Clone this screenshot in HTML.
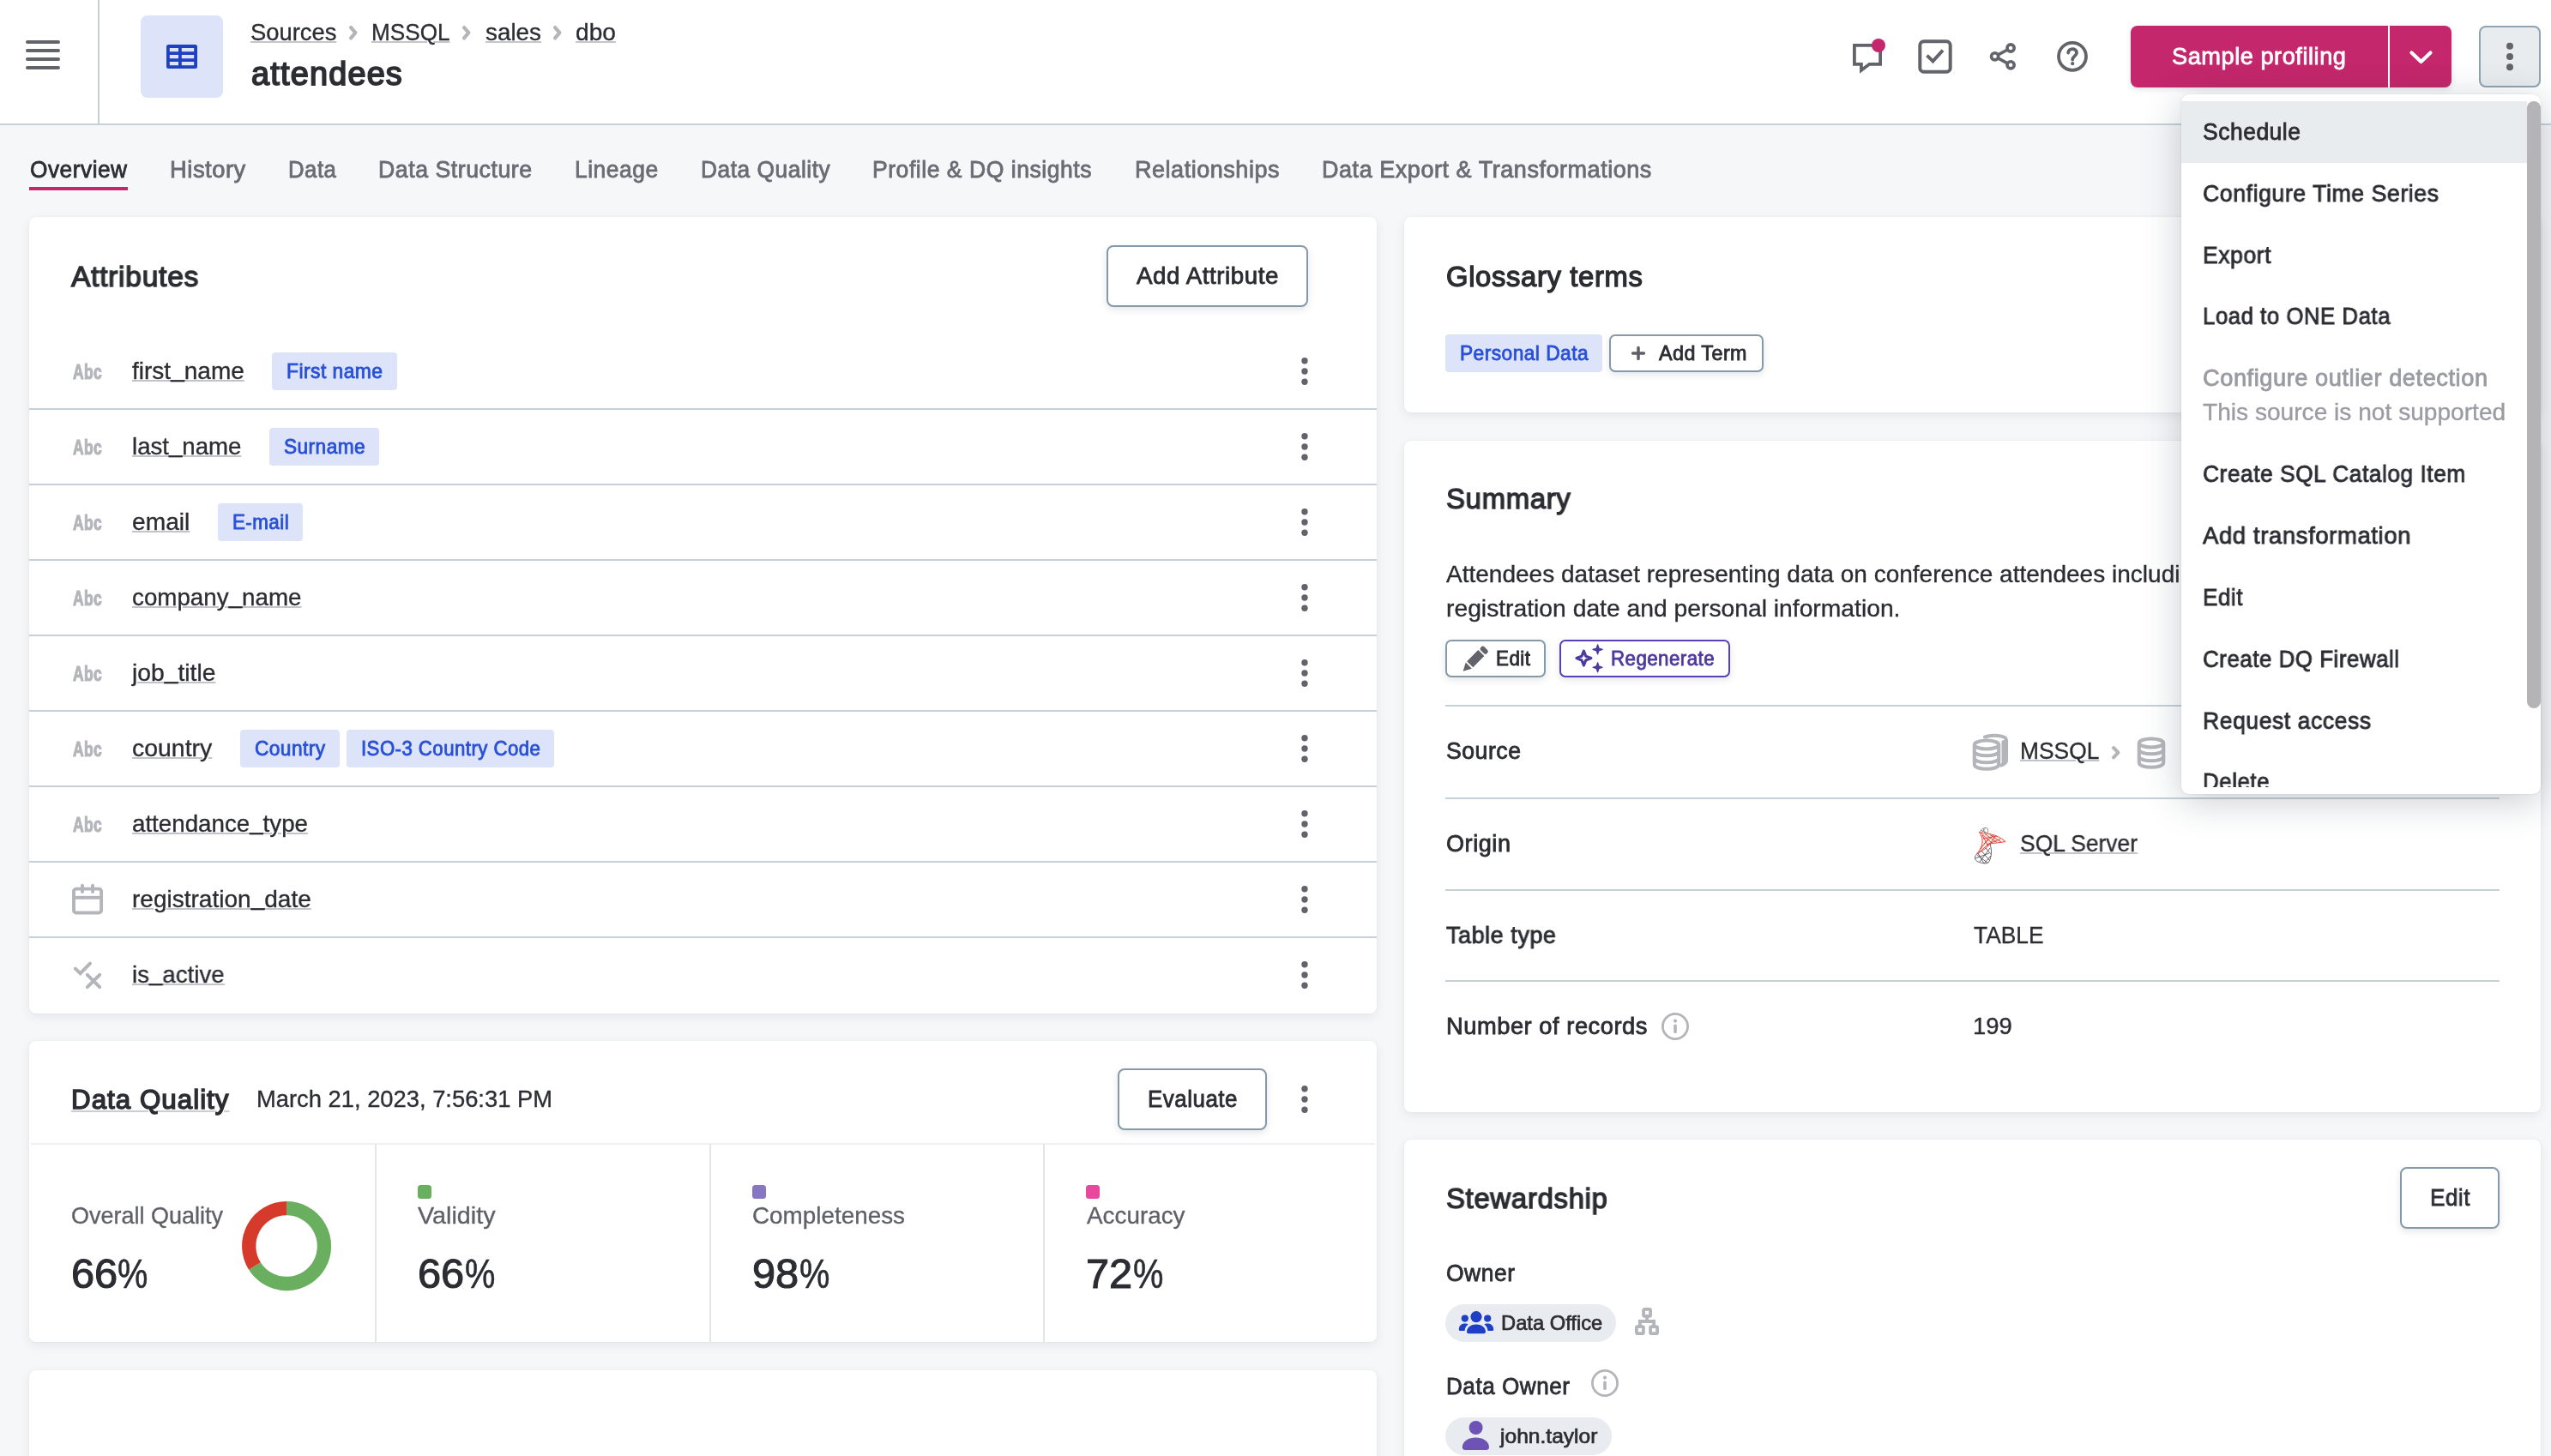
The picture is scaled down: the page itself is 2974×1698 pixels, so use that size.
<!DOCTYPE html>
<html><head><meta charset="utf-8"><title>attendees</title>
<style>html,body{margin:0;padding:0;width:2974px;height:1698px;overflow:hidden;}body{position:relative;background:#f6f7f9;font-family:"Liberation Sans",sans-serif;}#r{position:absolute;left:0;top:0;width:100%;height:100%;overflow:hidden;will-change:transform;}#r>div,#r>svg,#r>span,#menuclip>span{position:absolute;}svg{overflow:visible;display:block;}.t{white-space:pre;line-height:1;display:block;text-decoration-skip-ink:auto;}</style></head>
<body>
<div id="r">
<div style="left:0px;top:0px;width:2974px;height:144px;background:#fff;"></div>
<div style="left:0px;top:144px;width:2974px;height:2px;background:#c6d1d7;"></div>
<div style="left:114px;top:0px;width:2px;height:144px;background:#c6d1d7;"></div>
<div style="left:30px;top:47px;width:40px;height:4px;background:#62636b;border-radius:2px;"></div>
<div style="left:30px;top:57px;width:40px;height:4px;background:#62636b;border-radius:2px;"></div>
<div style="left:30px;top:67px;width:40px;height:4px;background:#62636b;border-radius:2px;"></div>
<div style="left:30px;top:77px;width:40px;height:4px;background:#62636b;border-radius:2px;"></div>
<div style="left:164px;top:18px;width:96px;height:96px;background:#dde3f8;border-radius:8px;"></div>
<svg style="left:194px;top:52px;" width="36" height="28" viewBox="0 0 36 28"><rect width="36" height="28" rx="2.5" fill="#2140c0"/><rect x="3.8" y="4" width="10.2" height="4.2" fill="#dde3f8"/><rect x="17.8" y="4" width="14.4" height="4.2" fill="#dde3f8"/><rect x="3.8" y="12" width="10.2" height="4.2" fill="#dde3f8"/><rect x="17.8" y="12" width="14.4" height="4.2" fill="#dde3f8"/><rect x="3.8" y="20" width="10.2" height="4.2" fill="#dde3f8"/><rect x="17.8" y="20" width="14.4" height="4.2" fill="#dde3f8"/></svg>
<span class="t" style="left:292.00px;top:24.00px;font-size:28px;color:#2c2d33;-webkit-text-stroke:0.34px #2c2d33;transform:scaleX(0.9774);transform-origin:0 0;text-decoration:underline;text-decoration-color:#c4c5ca;text-decoration-thickness:2px;text-underline-offset:1.0px;">Sources</span>
<svg style="left:404px;top:27px;" width="16" height="22.4" viewBox="-3 -3 16 22.4"><path d="M2.1 2.1 L7.38 8.2 L2.1 14.299999999999999" fill="none" stroke="#b4b5bb" stroke-width="4.2" stroke-linecap="round" stroke-linejoin="round"/></svg>
<span class="t" style="left:433.00px;top:24.00px;font-size:28px;color:#2c2d33;-webkit-text-stroke:0.34px #2c2d33;transform:scaleX(0.9334);transform-origin:0 0;text-decoration:underline;text-decoration-color:#c4c5ca;text-decoration-thickness:2px;text-underline-offset:1.0px;">MSSQL</span>
<svg style="left:536px;top:27px;" width="16" height="22.4" viewBox="-3 -3 16 22.4"><path d="M2.1 2.1 L7.38 8.2 L2.1 14.299999999999999" fill="none" stroke="#b4b5bb" stroke-width="4.2" stroke-linecap="round" stroke-linejoin="round"/></svg>
<span class="t" style="left:565.50px;top:24.00px;font-size:28px;color:#2c2d33;-webkit-text-stroke:0.34px #2c2d33;transform:scaleX(0.9943);transform-origin:0 0;text-decoration:underline;text-decoration-color:#c4c5ca;text-decoration-thickness:2px;text-underline-offset:1.0px;">sales</span>
<svg style="left:642px;top:27px;" width="16" height="22.4" viewBox="-3 -3 16 22.4"><path d="M2.1 2.1 L7.38 8.2 L2.1 14.299999999999999" fill="none" stroke="#b4b5bb" stroke-width="4.2" stroke-linecap="round" stroke-linejoin="round"/></svg>
<span class="t" style="left:671.00px;top:24.00px;font-size:28px;color:#2c2d33;-webkit-text-stroke:0.34px #2c2d33;transform:scaleX(1.0060);transform-origin:0 0;text-decoration:underline;text-decoration-color:#c4c5ca;text-decoration-thickness:2px;text-underline-offset:1.0px;">dbo</span>
<span class="t" style="left:292.80px;top:67.00px;font-size:38px;color:#2c2d33;-webkit-text-stroke:1.75px #2c2d33;letter-spacing:1.22px;transform:scaleX(0.9949);transform-origin:0 0;">attendees</span>
<svg style="left:2150px;top:40px;" width="60" height="60" viewBox="0 0 60 60"><path d="M11.9 12.9 H42.1 V34.8 H29.4 L19.9 42 V34.8 H11.9 Z" fill="none" stroke="#62636b" stroke-width="3.8" stroke-linejoin="miter"/><circle cx="40" cy="13" r="8" fill="#c4276b"/></svg>
<svg style="left:2230px;top:40px;" width="52" height="52" viewBox="0 0 52 52"><rect x="8.3" y="8.3" width="35.4" height="35.4" rx="4.5" fill="none" stroke="#62636b" stroke-width="4"/><path d="M16.5 24.6 L23.4 31.4 L35 18.6" fill="none" stroke="#62636b" stroke-width="3.8"/></svg>
<svg style="left:2314px;top:44px;" width="44" height="44" viewBox="0 0 44 44"><g fill="none" stroke="#62636b" stroke-width="3.6"><circle cx="11.6" cy="21.8" r="4.1"/><circle cx="30.1" cy="12" r="4.1"/><circle cx="30.1" cy="31.8" r="4.1"/><path d="M15.4 19.8 L26.4 14 M15.4 23.8 L26.4 29.8"/></g></svg>
<svg style="left:2394px;top:44px;" width="44" height="44" viewBox="0 0 44 44"><circle cx="22" cy="21.8" r="16" fill="none" stroke="#62636b" stroke-width="3.8"/><path d="M17.2 17.6 C17.2 11.6 27 11.6 27 17.4 C27 21.4 22.2 21.4 22.2 25.6" fill="none" stroke="#62636b" stroke-width="3.8" stroke-linecap="round"/><circle cx="22.2" cy="30.2" r="2.1" fill="#62636b"/></svg>
<div style="left:2484px;top:30px;width:374px;height:72px;background:#c4276b;border-radius:8px;box-shadow:0 2px 6px rgba(40,50,70,.14);"></div>
<div style="left:2784px;top:30px;width:2px;height:72px;background:#fff;"></div>
<span class="t" style="left:2532.00px;top:52.00px;font-size:28px;color:#ffffff;-webkit-text-stroke:0.84px #ffffff;letter-spacing:0.56px;transform:scaleX(0.9703);transform-origin:0 0;">Sample profiling</span>
<svg style="left:2805px;top:54px;" width="36" height="26" viewBox="0 0 36 26"><path d="M6.5 7.5 L17.5 18 L28.5 7.5" fill="none" stroke="#fff" stroke-width="4.2" stroke-linecap="round" stroke-linejoin="round"/></svg>
<div style="left:2890px;top:30px;width:72px;height:72px;background:#e8ecef;border:2px solid #8fa3b3;border-radius:8px;box-sizing:border-box;"></div>
<svg style="left:2916px;top:46.400000000000006px;" width="20" height="40" viewBox="0 0 20 40"><circle cx="10" cy="7.800000000000001" r="4.0" fill="#62636b"/><circle cx="10" cy="20" r="4.0" fill="#62636b"/><circle cx="10" cy="32.2" r="4.0" fill="#62636b"/></svg>
<span class="t" style="left:34.60px;top:184.00px;font-size:28px;color:#2c2d33;-webkit-text-stroke:0.84px #2c2d33;letter-spacing:0.56px;transform:scaleX(0.9375);transform-origin:0 0;">Overview</span>
<span class="t" style="left:197.80px;top:184.00px;font-size:28px;color:#6a6b74;-webkit-text-stroke:0.84px #6a6b74;letter-spacing:0.56px;transform:scaleX(0.9753);transform-origin:0 0;">History</span>
<span class="t" style="left:335.60px;top:184.00px;font-size:28px;color:#6a6b74;-webkit-text-stroke:0.84px #6a6b74;letter-spacing:0.56px;transform:scaleX(0.9187);transform-origin:0 0;">Data</span>
<span class="t" style="left:441.40px;top:184.00px;font-size:28px;color:#6a6b74;-webkit-text-stroke:0.84px #6a6b74;letter-spacing:0.56px;transform:scaleX(0.9534);transform-origin:0 0;">Data Structure</span>
<span class="t" style="left:670.30px;top:184.00px;font-size:28px;color:#6a6b74;-webkit-text-stroke:0.84px #6a6b74;letter-spacing:0.56px;transform:scaleX(0.9432);transform-origin:0 0;">Lineage</span>
<span class="t" style="left:817.00px;top:184.00px;font-size:28px;color:#6a6b74;-webkit-text-stroke:0.84px #6a6b74;letter-spacing:0.56px;transform:scaleX(0.9403);transform-origin:0 0;">Data Quality</span>
<span class="t" style="left:1017.20px;top:184.00px;font-size:28px;color:#6a6b74;-webkit-text-stroke:0.84px #6a6b74;letter-spacing:0.56px;transform:scaleX(0.9479);transform-origin:0 0;">Profile &amp; DQ insights</span>
<span class="t" style="left:1322.60px;top:184.00px;font-size:28px;color:#6a6b74;-webkit-text-stroke:0.84px #6a6b74;letter-spacing:0.56px;transform:scaleX(0.9636);transform-origin:0 0;">Relationships</span>
<span class="t" style="left:1540.60px;top:184.00px;font-size:28px;color:#6a6b74;-webkit-text-stroke:0.84px #6a6b74;letter-spacing:0.56px;transform:scaleX(0.9645);transform-origin:0 0;">Data Export &amp; Transformations</span>
<div style="left:34px;top:218px;width:115px;height:4px;background:#c4276b;"></div>
<div style="left:34px;top:253px;width:1571px;height:929px;background:#fff;border-radius:8px;box-shadow:0 0 2px rgba(50,70,80,.08),0 4px 12px rgba(50,70,80,.09);"></div>
<span class="t" style="left:83.30px;top:305.00px;font-size:34px;color:#2c2d33;-webkit-text-stroke:1.36px #2c2d33;letter-spacing:0.68px;transform:scaleX(0.9905);transform-origin:0 0;">Attributes</span>
<div style="left:1290px;top:286px;width:235px;height:72px;background:#fff;border:2px solid #8499a9;border-radius:8px;box-sizing:border-box;box-shadow:0 3px 9px rgba(40,50,70,.12);"></div>
<span class="t" style="left:1325.00px;top:308.00px;font-size:28px;color:#2c2d33;-webkit-text-stroke:0.84px #2c2d33;letter-spacing:0.56px;transform:scaleX(0.9903);transform-origin:0 0;">Add Attribute</span>
<span class="t" style="left:85px;top:423px;font-size:23.4px;font-weight:700;color:#b4b5bb;transform:scaleX(0.745);transform-origin:0 0;letter-spacing:0.6px;-webkit-text-stroke:1.1px #b4b5bb;">Abc</span>
<span class="t" style="left:154.20px;top:419.00px;font-size:28px;color:#2c2d33;-webkit-text-stroke:0.34px #2c2d33;transform:scaleX(1.0005);transform-origin:0 0;text-decoration:underline;text-decoration-color:#c3c4c9;text-decoration-thickness:2px;text-underline-offset:1.0px;">first<i style="display:inline-block;font-style:normal;transform:translateY(-3.5px);text-decoration:underline;text-decoration-color:#c3c4c9;text-decoration-thickness:2px;text-underline-offset:4.5px;text-decoration-skip-ink:none;">_</i>name</span>
<div style="left:317.0px;top:411px;width:146px;height:44px;background:#dde3f8;border-radius:4px;"></div>
<span class="t" style="left:334.00px;top:421.00px;font-size:24px;color:#2850d8;-webkit-text-stroke:0.86px #2850d8;letter-spacing:0.48px;transform:scaleX(0.9521);transform-origin:0 0;">First name</span>
<svg style="left:1511px;top:413.2px;" width="20" height="40" viewBox="0 0 20 40"><circle cx="10" cy="7.800000000000001" r="3.7" fill="#62636b"/><circle cx="10" cy="20" r="3.7" fill="#62636b"/><circle cx="10" cy="32.2" r="3.7" fill="#62636b"/></svg>
<div style="left:34px;top:476px;width:1571px;height:2px;background:#c6d1d7;"></div>
<span class="t" style="left:85px;top:511px;font-size:23.4px;font-weight:700;color:#b4b5bb;transform:scaleX(0.745);transform-origin:0 0;letter-spacing:0.6px;-webkit-text-stroke:1.1px #b4b5bb;">Abc</span>
<span class="t" style="left:154.20px;top:507.00px;font-size:28px;color:#2c2d33;-webkit-text-stroke:0.34px #2c2d33;transform:scaleX(0.9860);transform-origin:0 0;text-decoration:underline;text-decoration-color:#c3c4c9;text-decoration-thickness:2px;text-underline-offset:1.0px;">last<i style="display:inline-block;font-style:normal;transform:translateY(-3.5px);text-decoration:underline;text-decoration-color:#c3c4c9;text-decoration-thickness:2px;text-underline-offset:4.5px;text-decoration-skip-ink:none;">_</i>name</span>
<div style="left:313.6px;top:499px;width:128.6px;height:44px;background:#dde3f8;border-radius:4px;"></div>
<span class="t" style="left:330.60px;top:509.00px;font-size:24px;color:#2850d8;-webkit-text-stroke:0.86px #2850d8;letter-spacing:0.48px;transform:scaleX(0.9439);transform-origin:0 0;">Surname</span>
<svg style="left:1511px;top:501.19999999999993px;" width="20" height="40" viewBox="0 0 20 40"><circle cx="10" cy="7.800000000000001" r="3.7" fill="#62636b"/><circle cx="10" cy="20" r="3.7" fill="#62636b"/><circle cx="10" cy="32.2" r="3.7" fill="#62636b"/></svg>
<div style="left:34px;top:564px;width:1571px;height:2px;background:#c6d1d7;"></div>
<span class="t" style="left:85px;top:599px;font-size:23.4px;font-weight:700;color:#b4b5bb;transform:scaleX(0.745);transform-origin:0 0;letter-spacing:0.6px;-webkit-text-stroke:1.1px #b4b5bb;">Abc</span>
<span class="t" style="left:154.20px;top:595.00px;font-size:28px;color:#2c2d33;-webkit-text-stroke:0.34px #2c2d33;transform:scaleX(1.0071);transform-origin:0 0;text-decoration:underline;text-decoration-color:#c3c4c9;text-decoration-thickness:2px;text-underline-offset:1.0px;">email</span>
<div style="left:253.6px;top:587px;width:99.6px;height:44px;background:#dde3f8;border-radius:4px;"></div>
<span class="t" style="left:270.60px;top:597.00px;font-size:24px;color:#2850d8;-webkit-text-stroke:0.86px #2850d8;letter-spacing:0.48px;transform:scaleX(0.9324);transform-origin:0 0;">E-mail</span>
<svg style="left:1511px;top:589.1999999999999px;" width="20" height="40" viewBox="0 0 20 40"><circle cx="10" cy="7.800000000000001" r="3.7" fill="#62636b"/><circle cx="10" cy="20" r="3.7" fill="#62636b"/><circle cx="10" cy="32.2" r="3.7" fill="#62636b"/></svg>
<div style="left:34px;top:652px;width:1571px;height:2px;background:#c6d1d7;"></div>
<span class="t" style="left:85px;top:687px;font-size:23.4px;font-weight:700;color:#b4b5bb;transform:scaleX(0.745);transform-origin:0 0;letter-spacing:0.6px;-webkit-text-stroke:1.1px #b4b5bb;">Abc</span>
<span class="t" style="left:154.20px;top:683.00px;font-size:28px;color:#2c2d33;-webkit-text-stroke:0.34px #2c2d33;transform:scaleX(0.9912);transform-origin:0 0;text-decoration:underline;text-decoration-color:#c3c4c9;text-decoration-thickness:2px;text-underline-offset:1.0px;">company<i style="display:inline-block;font-style:normal;transform:translateY(-3.5px);text-decoration:underline;text-decoration-color:#c3c4c9;text-decoration-thickness:2px;text-underline-offset:4.5px;text-decoration-skip-ink:none;">_</i>name</span>
<svg style="left:1511px;top:677.1999999999999px;" width="20" height="40" viewBox="0 0 20 40"><circle cx="10" cy="7.800000000000001" r="3.7" fill="#62636b"/><circle cx="10" cy="20" r="3.7" fill="#62636b"/><circle cx="10" cy="32.2" r="3.7" fill="#62636b"/></svg>
<div style="left:34px;top:740px;width:1571px;height:2px;background:#c6d1d7;"></div>
<span class="t" style="left:85px;top:775px;font-size:23.4px;font-weight:700;color:#b4b5bb;transform:scaleX(0.745);transform-origin:0 0;letter-spacing:0.6px;-webkit-text-stroke:1.1px #b4b5bb;">Abc</span>
<span class="t" style="left:154.20px;top:771.00px;font-size:28px;color:#2c2d33;-webkit-text-stroke:0.34px #2c2d33;transform:scaleX(1.0100);transform-origin:0 0;text-decoration:underline;text-decoration-color:#c3c4c9;text-decoration-thickness:2px;text-underline-offset:1.0px;">job<i style="display:inline-block;font-style:normal;transform:translateY(-3.5px);text-decoration:underline;text-decoration-color:#c3c4c9;text-decoration-thickness:2px;text-underline-offset:4.5px;text-decoration-skip-ink:none;">_</i>title</span>
<svg style="left:1511px;top:765.1999999999999px;" width="20" height="40" viewBox="0 0 20 40"><circle cx="10" cy="7.800000000000001" r="3.7" fill="#62636b"/><circle cx="10" cy="20" r="3.7" fill="#62636b"/><circle cx="10" cy="32.2" r="3.7" fill="#62636b"/></svg>
<div style="left:34px;top:828px;width:1571px;height:2px;background:#c6d1d7;"></div>
<span class="t" style="left:85px;top:863px;font-size:23.4px;font-weight:700;color:#b4b5bb;transform:scaleX(0.745);transform-origin:0 0;letter-spacing:0.6px;-webkit-text-stroke:1.1px #b4b5bb;">Abc</span>
<span class="t" style="left:154.20px;top:859.00px;font-size:28px;color:#2c2d33;-webkit-text-stroke:0.34px #2c2d33;transform:scaleX(1.0160);transform-origin:0 0;text-decoration:underline;text-decoration-color:#c3c4c9;text-decoration-thickness:2px;text-underline-offset:1.0px;">country</span>
<div style="left:279.5px;top:851px;width:116px;height:44px;background:#dde3f8;border-radius:4px;"></div>
<span class="t" style="left:296.50px;top:861.00px;font-size:24px;color:#2850d8;-webkit-text-stroke:0.86px #2850d8;letter-spacing:0.48px;transform:scaleX(0.9439);transform-origin:0 0;">Country</span>
<div style="left:403.5px;top:851px;width:242.8px;height:44px;background:#dde3f8;border-radius:4px;"></div>
<span class="t" style="left:420.50px;top:861.00px;font-size:24px;color:#2850d8;-webkit-text-stroke:0.86px #2850d8;letter-spacing:0.48px;transform:scaleX(0.9258);transform-origin:0 0;">ISO-3 Country Code</span>
<svg style="left:1511px;top:853.1999999999999px;" width="20" height="40" viewBox="0 0 20 40"><circle cx="10" cy="7.800000000000001" r="3.7" fill="#62636b"/><circle cx="10" cy="20" r="3.7" fill="#62636b"/><circle cx="10" cy="32.2" r="3.7" fill="#62636b"/></svg>
<div style="left:34px;top:916px;width:1571px;height:2px;background:#c6d1d7;"></div>
<span class="t" style="left:85px;top:951px;font-size:23.4px;font-weight:700;color:#b4b5bb;transform:scaleX(0.745);transform-origin:0 0;letter-spacing:0.6px;-webkit-text-stroke:1.1px #b4b5bb;">Abc</span>
<span class="t" style="left:154.20px;top:947.00px;font-size:28px;color:#2c2d33;-webkit-text-stroke:0.34px #2c2d33;transform:scaleX(0.9899);transform-origin:0 0;text-decoration:underline;text-decoration-color:#c3c4c9;text-decoration-thickness:2px;text-underline-offset:1.0px;">attendance<i style="display:inline-block;font-style:normal;transform:translateY(-3.5px);text-decoration:underline;text-decoration-color:#c3c4c9;text-decoration-thickness:2px;text-underline-offset:4.5px;text-decoration-skip-ink:none;">_</i>type</span>
<svg style="left:1511px;top:941.1999999999999px;" width="20" height="40" viewBox="0 0 20 40"><circle cx="10" cy="7.800000000000001" r="3.7" fill="#62636b"/><circle cx="10" cy="20" r="3.7" fill="#62636b"/><circle cx="10" cy="32.2" r="3.7" fill="#62636b"/></svg>
<div style="left:34px;top:1004px;width:1571px;height:2px;background:#c6d1d7;"></div>
<svg style="left:78px;top:1026.3px;" width="48" height="48" viewBox="0 0 48 48"><g fill="none" stroke="#b4b5bb" stroke-width="3.9"><rect x="8" y="10.6" width="32.1" height="27.9" rx="3"/><path d="M8 20.8 H40"/><path d="M18 6.8 V14 M30 6.8 V14" stroke-linecap="round"/></g></svg>
<span class="t" style="left:154.20px;top:1035.00px;font-size:28px;color:#2c2d33;-webkit-text-stroke:0.34px #2c2d33;transform:scaleX(1.0010);transform-origin:0 0;text-decoration:underline;text-decoration-color:#c3c4c9;text-decoration-thickness:2px;text-underline-offset:1.0px;">registration<i style="display:inline-block;font-style:normal;transform:translateY(-3.5px);text-decoration:underline;text-decoration-color:#c3c4c9;text-decoration-thickness:2px;text-underline-offset:4.5px;text-decoration-skip-ink:none;">_</i>date</span>
<svg style="left:1511px;top:1029.2px;" width="20" height="40" viewBox="0 0 20 40"><circle cx="10" cy="7.800000000000001" r="3.7" fill="#62636b"/><circle cx="10" cy="20" r="3.7" fill="#62636b"/><circle cx="10" cy="32.2" r="3.7" fill="#62636b"/></svg>
<div style="left:34px;top:1092px;width:1571px;height:2px;background:#c6d1d7;"></div>
<svg style="left:78px;top:1112.8px;" width="48" height="48" viewBox="0 0 48 48"><g fill="none" stroke="#b4b5bb" stroke-width="4" stroke-linecap="round"><path d="M9.8 16.6 L15.6 22.2 L27 10.6"/><path d="M23.8 23.8 L38.2 38.2 M38.2 23.8 L23.8 38.2"/></g></svg>
<span class="t" style="left:154.20px;top:1123.00px;font-size:28px;color:#2c2d33;-webkit-text-stroke:0.34px #2c2d33;transform:scaleX(0.9865);transform-origin:0 0;text-decoration:underline;text-decoration-color:#c3c4c9;text-decoration-thickness:2px;text-underline-offset:1.0px;">is<i style="display:inline-block;font-style:normal;transform:translateY(-3.5px);text-decoration:underline;text-decoration-color:#c3c4c9;text-decoration-thickness:2px;text-underline-offset:4.5px;text-decoration-skip-ink:none;">_</i>active</span>
<svg style="left:1511px;top:1117.2px;" width="20" height="40" viewBox="0 0 20 40"><circle cx="10" cy="7.800000000000001" r="3.7" fill="#62636b"/><circle cx="10" cy="20" r="3.7" fill="#62636b"/><circle cx="10" cy="32.2" r="3.7" fill="#62636b"/></svg>
<div style="left:34px;top:1214px;width:1571px;height:351px;background:#fff;border-radius:8px;box-shadow:0 0 2px rgba(50,70,80,.08),0 4px 12px rgba(50,70,80,.09);"></div>
<span class="t" style="left:82.50px;top:1266.00px;font-size:32px;color:#2c2d33;-webkit-text-stroke:1.47px #2c2d33;letter-spacing:1.02px;transform:scaleX(0.9797);transform-origin:0 0;text-decoration:underline;text-decoration-color:#cdced3;text-decoration-thickness:2px;text-underline-offset:2.2px;">Data Quality</span>
<span class="t" style="left:299.00px;top:1268.00px;font-size:28px;color:#2c2d33;-webkit-text-stroke:0.34px #2c2d33;transform:scaleX(0.9764);transform-origin:0 0;">March 21, 2023, 7:56:31 PM</span>
<div style="left:1303px;top:1246px;width:174px;height:72px;background:#fff;border:2px solid #8499a9;border-radius:8px;box-sizing:border-box;box-shadow:0 3px 9px rgba(40,50,70,.12);"></div>
<span class="t" style="left:1338.00px;top:1268.00px;font-size:28px;color:#2c2d33;-webkit-text-stroke:0.84px #2c2d33;letter-spacing:0.56px;transform:scaleX(0.9255);transform-origin:0 0;">Evaluate</span>
<svg style="left:1511px;top:1262px;" width="20" height="40" viewBox="0 0 20 40"><circle cx="10" cy="7.800000000000001" r="3.7" fill="#62636b"/><circle cx="10" cy="20" r="3.7" fill="#62636b"/><circle cx="10" cy="32.2" r="3.7" fill="#62636b"/></svg>
<div style="left:36px;top:1333px;width:1567px;height:1.5px;background:#eff0f3;"></div>
<div style="left:437px;top:1334px;width:2px;height:231px;background:#e4e5e8;"></div>
<div style="left:827px;top:1334px;width:2px;height:231px;background:#e4e5e8;"></div>
<div style="left:1216px;top:1334px;width:2px;height:231px;background:#e4e5e8;"></div>
<span class="t" style="left:82.50px;top:1404.00px;font-size:28px;color:#5f6068;-webkit-text-stroke:0.34px #5f6068;transform:scaleX(0.9639);transform-origin:0 0;">Overall Quality</span>
<span class="t" style="left:82.50px;top:1462.00px;font-size:48px;color:#2c2d33;-webkit-text-stroke:1.06px #2c2d33;transform:scaleX(1.0152);transform-origin:0 0;">66</span>
<span class="t" style="left:137.10px;top:1462.00px;font-size:48px;color:#2c2d33;-webkit-text-stroke:0.58px #2c2d33;transform:scaleX(0.8293);transform-origin:0 0;">%</span>
<svg style="left:274px;top:1393px;" width="120" height="120" viewBox="0 0 120 120"><path d="M60.10 16.20 A43.9 43.9 0 1 1 22.95 83.49" fill="none" stroke="#6aae5f" stroke-width="16.3"/><path d="M22.95 83.49 A43.9 43.9 0 0 1 60.10 16.20" fill="none" stroke="#d63a2a" stroke-width="16.3"/></svg>
<div style="left:487px;top:1382px;width:16px;height:16px;background:#6aae5f;border-radius:3.5px;"></div>
<span class="t" style="left:487.30px;top:1404.00px;font-size:28px;color:#5f6068;-webkit-text-stroke:0.34px #5f6068;transform:scaleX(1.0262);transform-origin:0 0;">Validity</span>
<span class="t" style="left:487.00px;top:1462.00px;font-size:48px;color:#2c2d33;-webkit-text-stroke:1.06px #2c2d33;transform:scaleX(1.0152);transform-origin:0 0;">66</span>
<span class="t" style="left:541.60px;top:1462.00px;font-size:48px;color:#2c2d33;-webkit-text-stroke:0.58px #2c2d33;transform:scaleX(0.8293);transform-origin:0 0;">%</span>
<div style="left:877px;top:1382px;width:16px;height:16px;background:#8776c3;border-radius:3.5px;"></div>
<span class="t" style="left:877.30px;top:1404.00px;font-size:28px;color:#5f6068;-webkit-text-stroke:0.34px #5f6068;transform:scaleX(0.9945);transform-origin:0 0;">Completeness</span>
<span class="t" style="left:877.00px;top:1462.00px;font-size:48px;color:#2c2d33;-webkit-text-stroke:1.06px #2c2d33;transform:scaleX(1.0152);transform-origin:0 0;">98</span>
<span class="t" style="left:931.60px;top:1462.00px;font-size:48px;color:#2c2d33;-webkit-text-stroke:0.58px #2c2d33;transform:scaleX(0.8293);transform-origin:0 0;">%</span>
<div style="left:1266.3px;top:1382px;width:16px;height:16px;background:#e8489c;border-radius:3.5px;"></div>
<span class="t" style="left:1266.60px;top:1404.00px;font-size:28px;color:#5f6068;-webkit-text-stroke:0.34px #5f6068;transform:scaleX(0.9943);transform-origin:0 0;">Accuracy</span>
<span class="t" style="left:1266.30px;top:1462.00px;font-size:48px;color:#2c2d33;-webkit-text-stroke:1.06px #2c2d33;transform:scaleX(1.0152);transform-origin:0 0;">72</span>
<span class="t" style="left:1320.90px;top:1462.00px;font-size:48px;color:#2c2d33;-webkit-text-stroke:0.58px #2c2d33;transform:scaleX(0.8293);transform-origin:0 0;">%</span>
<div style="left:34px;top:1598px;width:1571px;height:140px;background:#fff;border-radius:8px;box-shadow:0 0 2px rgba(50,70,80,.08),0 4px 12px rgba(50,70,80,.09);"></div>
<div style="left:1637px;top:253px;width:1325px;height:228px;background:#fff;border-radius:8px;box-shadow:0 0 2px rgba(50,70,80,.08),0 4px 12px rgba(50,70,80,.09);"></div>
<span class="t" style="left:1685.50px;top:305.00px;font-size:34px;color:#2c2d33;-webkit-text-stroke:1.36px #2c2d33;letter-spacing:0.68px;transform:scaleX(0.9638);transform-origin:0 0;">Glossary terms</span>
<div style="left:1685px;top:390px;width:183px;height:44px;background:#dde3f8;border-radius:4px;"></div>
<span class="t" style="left:1701.50px;top:400.00px;font-size:24px;color:#2850d8;-webkit-text-stroke:0.86px #2850d8;letter-spacing:0.48px;transform:scaleX(0.9474);transform-origin:0 0;">Personal Data</span>
<div style="left:1876px;top:390px;width:180px;height:44px;background:#fff;border:2px solid #8499a9;border-radius:7px;box-sizing:border-box;box-shadow:0 3px 9px rgba(40,50,70,.12);"></div>
<svg style="left:1900px;top:401.8px;" width="20" height="20" viewBox="0 0 20 20"><path d="M10 3.6 V16.4 M3.6 10 H16.4" stroke="#5d5e66" stroke-width="3.5" stroke-linecap="round"/></svg>
<span class="t" style="left:1934.40px;top:400.00px;font-size:24px;color:#2c2d33;-webkit-text-stroke:0.86px #2c2d33;letter-spacing:0.48px;transform:scaleX(0.9706);transform-origin:0 0;">Add Term</span>
<div style="left:1637px;top:514px;width:1325px;height:783px;background:#fff;border-radius:8px;box-shadow:0 0 2px rgba(50,70,80,.08),0 4px 12px rgba(50,70,80,.09);"></div>
<span class="t" style="left:1685.50px;top:564.00px;font-size:34px;color:#2c2d33;-webkit-text-stroke:1.36px #2c2d33;letter-spacing:0.68px;transform:scaleX(0.9685);transform-origin:0 0;">Summary</span>
<span class="t" style="left:1685.50px;top:656.00px;font-size:28px;color:#2c2d33;-webkit-text-stroke:0.34px #2c2d33;transform:scaleX(1.0010);transform-origin:0 0;">Attendees dataset representing data on conference attendees includi</span>
<span class="t" style="left:1685.50px;top:696.00px;font-size:28px;color:#2c2d33;-webkit-text-stroke:0.34px #2c2d33;transform:scaleX(1.0094);transform-origin:0 0;">registration date and personal information.</span>
<div style="left:1685px;top:746px;width:117px;height:44px;background:#fff;border:2px solid #8499a9;border-radius:7px;box-sizing:border-box;box-shadow:0 3px 9px rgba(40,50,70,.12);"></div>
<svg style="left:1702px;top:750px;" width="36" height="36" viewBox="0 0 36 36"><g transform="translate(17.8 18.6) rotate(45)"><rect x="-5" y="-17.6" width="10" height="5.8" rx="2.4" fill="#62636b"/><rect x="-5" y="-10" width="10" height="18.6" fill="#62636b"/><path d="M-5 10.6 H5 L0 20 Z" fill="#62636b"/></g></svg>
<span class="t" style="left:1743.60px;top:756.00px;font-size:24px;color:#2c2d33;-webkit-text-stroke:0.86px #2c2d33;letter-spacing:0.48px;transform:scaleX(0.9334);transform-origin:0 0;">Edit</span>
<div style="left:1818px;top:746px;width:199px;height:44px;background:#fff;border:2.4px solid #5a3fb6;border-radius:7px;box-sizing:border-box;box-shadow:0 3px 9px rgba(40,50,70,.12);"></div>
<svg style="left:1832px;top:750px;" width="40" height="36" viewBox="0 0 40 36"><path d="M14.40 9.20 L16.78 15.22 L22.80 17.60 L16.78 19.98 L14.40 26.00 L12.02 19.98 L6.00 17.60 L12.02 15.22 Z" fill="none" stroke="#4e3a9e" stroke-width="3.2" stroke-linejoin="round"/><path d="M30.60 1.80 L32.03 5.97 L36.20 7.40 L32.03 8.83 L30.60 13.00 L29.17 8.83 L25.00 7.40 L29.17 5.97 Z" fill="#4e3a9e" stroke="#4e3a9e" stroke-width="1.2" stroke-linejoin="round"/><path d="M30.60 22.70 L32.03 26.87 L36.20 28.30 L32.03 29.73 L30.60 33.90 L29.17 29.73 L25.00 28.30 L29.17 26.87 Z" fill="#4e3a9e" stroke="#4e3a9e" stroke-width="1.2" stroke-linejoin="round"/></svg>
<span class="t" style="left:1877.60px;top:756.00px;font-size:24px;color:#4e3a9e;-webkit-text-stroke:0.86px #4e3a9e;letter-spacing:0.48px;transform:scaleX(0.9291);transform-origin:0 0;">Regenerate</span>
<div style="left:1685px;top:822px;width:1229px;height:2px;background:#c6d1d7;"></div>
<div style="left:1685px;top:930px;width:1229px;height:2px;background:#c6d1d7;"></div>
<div style="left:1685px;top:1037px;width:1229px;height:2px;background:#c6d1d7;"></div>
<div style="left:1685px;top:1143px;width:1229px;height:2px;background:#c6d1d7;"></div>
<span class="t" style="left:1685.50px;top:862.00px;font-size:28px;color:#2c2d33;-webkit-text-stroke:0.84px #2c2d33;letter-spacing:0.56px;transform:scaleX(0.9503);transform-origin:0 0;">Source</span>
<span class="t" style="left:1685.50px;top:970.00px;font-size:28px;color:#2c2d33;-webkit-text-stroke:0.84px #2c2d33;letter-spacing:0.56px;transform:scaleX(0.9672);transform-origin:0 0;">Origin</span>
<span class="t" style="left:1685.50px;top:1077.00px;font-size:28px;color:#2c2d33;-webkit-text-stroke:0.84px #2c2d33;letter-spacing:0.56px;transform:scaleX(0.9644);transform-origin:0 0;">Table type</span>
<span class="t" style="left:1685.50px;top:1183.00px;font-size:28px;color:#2c2d33;-webkit-text-stroke:0.84px #2c2d33;letter-spacing:0.56px;transform:scaleX(0.9735);transform-origin:0 0;">Number of records</span>
<svg style="left:1932.8px;top:1176.8px;" width="40" height="40" viewBox="0 0 40 40"><circle cx="20" cy="20" r="14.6" fill="none" stroke="#b4b5bb" stroke-width="2.8"/><circle cx="20" cy="13.6" r="2.1" fill="#b4b5bb"/><rect x="18.2" y="17.6" width="3.6" height="10.4" rx="1.6" fill="#b4b5bb"/></svg>
<svg style="left:2300px;top:856px;" width="44" height="48" viewBox="0 -6 44 48"><path d="M14 -2.5 C22 -5.5 39 -4.5 39 1 L39 25 C39 28 36 29.5 33 30.5" fill="none" stroke="#b4b5bb" stroke-width="4.1" stroke-linecap="round"/><path d="M35 9 l3 -1 M35 17 l3 -1 M35 25 l3 -1" stroke="#b4b5bb" stroke-width="4.1" /><path d="M33.5 2 L39 0 L39 26 L33.5 29 Z" fill="#b4b5bb"/><ellipse cx="16" cy="6.5" rx="14.2" ry="5" fill="#fff" stroke="#b4b5bb" stroke-width="4.1"/><path d="M1.8 6.5 V29.5 C1.8 36.5 30.2 36.5 30.2 29.5 V6.5" fill="none" stroke="#b4b5bb" stroke-width="4.1"/><path d="M1.8 14 C1.8 21 30.2 21 30.2 14" fill="none" stroke="#b4b5bb" stroke-width="4.1"/><path d="M1.8 22 C1.8 29 30.2 29 30.2 22" fill="none" stroke="#b4b5bb" stroke-width="4.1"/></svg>
<span class="t" style="left:2355.40px;top:862.00px;font-size:28px;color:#2c2d33;-webkit-text-stroke:0.34px #2c2d33;transform:scaleX(0.9415);transform-origin:0 0;text-decoration:underline;text-decoration-color:#c3c4c9;text-decoration-thickness:2px;text-underline-offset:1.0px;">MSSQL</span>
<svg style="left:2459px;top:866.5px;" width="16" height="21.4" viewBox="-3 -3 16 21.4"><path d="M2.0 2.0 L7.50 7.7 L2.0 13.4" fill="none" stroke="#b4b5bb" stroke-width="4.0" stroke-linecap="round" stroke-linejoin="round"/></svg>
<svg style="left:2492px;top:854px;" width="44" height="48" viewBox="0 -6 44 48"><ellipse cx="16" cy="6.5" rx="14.2" ry="5" fill="#fff" stroke="#b4b5bb" stroke-width="4.1"/><path d="M1.8 6.5 V29.5 C1.8 36.5 30.2 36.5 30.2 29.5 V6.5" fill="none" stroke="#b4b5bb" stroke-width="4.1"/><path d="M1.8 14 C1.8 21 30.2 21 30.2 14" fill="none" stroke="#b4b5bb" stroke-width="4.1"/><path d="M1.8 22 C1.8 29 30.2 29 30.2 22" fill="none" stroke="#b4b5bb" stroke-width="4.1"/></svg>
<svg style="left:2298px;top:962px;" width="44" height="46" viewBox="0 0 44 46"><g fill="none" stroke-width="0.9"><path d="M9.5 8.5 C13 3.5 17 2.5 19 4 C20.5 7 19.5 9 18 11" stroke="#8a8a8a"/><path d="M11 6 L18 9 M14 4 L16 10 M17 3.5 L12 9" stroke="#8a8a8a"/><path d="M9.5 8.5 C16 10 30 10 40 19.5 C33 21 27 21 22 22 C19 26 14 30 6.5 34 C13 26 16 18 9.5 8.5 Z" stroke="#dd3a2c" fill="#f7c9c4" fill-opacity=".35"/><path d="M12 10 L24 21 M16 10.5 L30 20.5 M22 11.5 L35 20 M28 13.5 L22 22 M34 16.5 L18 23 M14 16 L30 13 M15 22 L26 12 M11 28 L20 16 M9 32 L21 22 M13 12 L20 25" stroke="#dd3a2c"/><path d="M6.5 34 C3 38 4 41 8 43 C13 45 18 45.5 20 44 C23 40 25 32 22 22" stroke="#55565c"/><path d="M7 35 L19 44 M5 39 L21 33 M10 43 L22 27 M15 45 L23 36 M8 33 L15 45 M12 30 L21 41 M17 27 L23 34" stroke="#55565c"/></g></svg>
<span class="t" style="left:2355.40px;top:970.00px;font-size:28px;color:#2c2d33;-webkit-text-stroke:0.34px #2c2d33;transform:scaleX(0.9432);transform-origin:0 0;text-decoration:underline;text-decoration-color:#c3c4c9;text-decoration-thickness:2px;text-underline-offset:1.0px;">SQL Server</span>
<span class="t" style="left:2300.50px;top:1077.00px;font-size:28px;color:#2c2d33;-webkit-text-stroke:0.34px #2c2d33;transform:scaleX(0.9408);transform-origin:0 0;">TABLE</span>
<span class="t" style="left:2299.60px;top:1183.00px;font-size:28px;color:#2c2d33;-webkit-text-stroke:0.34px #2c2d33;transform:scaleX(0.9803);transform-origin:0 0;">199</span>
<div style="left:1637px;top:1329px;width:1325px;height:420px;background:#fff;border-radius:8px;box-shadow:0 0 2px rgba(50,70,80,.08),0 4px 12px rgba(50,70,80,.09);"></div>
<span class="t" style="left:1685.50px;top:1380.00px;font-size:34px;color:#2c2d33;-webkit-text-stroke:1.36px #2c2d33;letter-spacing:0.68px;transform:scaleX(0.9687);transform-origin:0 0;">Stewardship</span>
<div style="left:2798px;top:1361px;width:116px;height:72px;background:#fff;border:2px solid #8499a9;border-radius:8px;box-sizing:border-box;box-shadow:0 3px 9px rgba(40,50,70,.12);"></div>
<span class="t" style="left:2833.00px;top:1383.00px;font-size:28px;color:#2c2d33;-webkit-text-stroke:0.84px #2c2d33;letter-spacing:0.56px;transform:scaleX(0.9307);transform-origin:0 0;">Edit</span>
<span class="t" style="left:1685.50px;top:1471.00px;font-size:28px;color:#2c2d33;-webkit-text-stroke:0.84px #2c2d33;letter-spacing:0.56px;transform:scaleX(0.9439);transform-origin:0 0;">Owner</span>
<div style="left:1685px;top:1521px;width:199px;height:44px;background:#e8ebef;border-radius:22px;"></div>
<svg style="left:1698px;top:1524px;" width="46" height="36" viewBox="0 0 46 36"><g fill="#1f3fc4"><circle cx="23" cy="11.6" r="6.6"/><path d="M12 29.4 C12 17.6 34 17.6 34 29.4 C34 30.6 32.5 31.2 31 31.2 H15 C13.5 31.2 12 30.6 12 29.4 Z"/><circle cx="9.8" cy="13.6" r="4.1"/><circle cx="36.2" cy="13.6" r="4.1"/><path d="M2.8 26.4 C2.8 19 11 18.4 13.6 20.4 C10.6 22.6 9.6 25.6 9.6 28 H4.6 C3.6 28 2.8 27.4 2.8 26.4 Z"/><path d="M43.2 26.4 C43.2 19 35 18.4 32.4 20.4 C35.4 22.6 36.4 25.6 36.4 28 H41.4 C42.4 28 43.2 27.4 43.2 26.4 Z"/></g></svg>
<span class="t" style="left:1750.30px;top:1531.00px;font-size:24px;color:#2c2d33;-webkit-text-stroke:0.29px #2c2d33;transform:scaleX(0.9881);transform-origin:0 0;-webkit-text-stroke:0.7px #2c2d33;">Data Office</span>
<svg style="left:1902px;top:1521px;" width="36" height="40" viewBox="0 0 36 40"><g fill="none" stroke="#b4b5bb" stroke-width="3.8"><rect x="14.1" y="5.9" width="8" height="8" rx="1.2"/><rect x="5.9" y="26.2" width="8" height="8" rx="1.2"/><rect x="22.1" y="26.2" width="8" height="8" rx="1.2"/><path d="M18.1 14 V20 M9.9 26 V20 H26.1 V26"/></g></svg>
<span class="t" style="left:1686.00px;top:1603.00px;font-size:28px;color:#2c2d33;-webkit-text-stroke:0.84px #2c2d33;letter-spacing:0.56px;transform:scaleX(0.9323);transform-origin:0 0;">Data Owner</span>
<svg style="left:1851px;top:1593px;" width="40" height="40" viewBox="0 0 40 40"><circle cx="20" cy="20" r="14.6" fill="none" stroke="#b4b5bb" stroke-width="2.8"/><circle cx="20" cy="13.6" r="2.1" fill="#b4b5bb"/><rect x="18.2" y="17.6" width="3.6" height="10.4" rx="1.6" fill="#b4b5bb"/></svg>
<div style="left:1685px;top:1653px;width:194px;height:44px;background:#e8ebef;border-radius:22px;"></div>
<svg style="left:1700px;top:1655px;" width="40" height="40" viewBox="0 0 40 40"><g fill="#6f52b6"><circle cx="20.6" cy="10" r="8"/><path d="M4.8 33 C4.8 17.6 36 17.6 36 33 C36 35 34.4 36 32.6 36 H8.2 C6.4 36 4.8 35 4.8 33 Z"/></g></svg>
<span class="t" style="left:1749.40px;top:1663.00px;font-size:24px;color:#2c2d33;-webkit-text-stroke:0.29px #2c2d33;transform:scaleX(1.0241);transform-origin:0 0;-webkit-text-stroke:0.7px #2c2d33;">john.taylor</span>
<div style="left:2543px;top:110px;width:419px;height:816px;background:#fff;border-radius:9px;box-shadow:0 0 2px rgba(40,55,75,.16),0 8px 44px rgba(40,55,75,.26);z-index:5;"></div>
<div style="left:2543px;top:118px;width:403px;height:72px;background:#e8ecef;z-index:6;"></div>
<div style="left:2946px;top:118px;width:16px;height:708px;background:#b4b4b7;border-radius:8px;z-index:6;"></div>
<div style="left:2543px;top:118px;width:403px;height:800px;overflow:hidden;z-index:7;" id="menuclip">
<span class="t" style="left:25.20px;top:22.00px;font-size:28px;color:#2c2d33;-webkit-text-stroke:0.84px #2c2d33;letter-spacing:0.56px;transform:scaleX(0.9443);transform-origin:0 0;">Schedule</span>
<span class="t" style="left:25.20px;top:94.00px;font-size:28px;color:#2c2d33;-webkit-text-stroke:0.84px #2c2d33;letter-spacing:0.56px;transform:scaleX(0.9540);transform-origin:0 0;">Configure Time Series</span>
<span class="t" style="left:25.20px;top:166.00px;font-size:28px;color:#2c2d33;-webkit-text-stroke:0.84px #2c2d33;letter-spacing:0.56px;transform:scaleX(0.9490);transform-origin:0 0;">Export</span>
<span class="t" style="left:25.20px;top:237.00px;font-size:28px;color:#2c2d33;-webkit-text-stroke:0.84px #2c2d33;letter-spacing:0.56px;transform:scaleX(0.9211);transform-origin:0 0;">Load to ONE Data</span>
<span class="t" style="left:25.20px;top:309.00px;font-size:28px;color:#9a9ba3;-webkit-text-stroke:0.84px #9a9ba3;letter-spacing:0.56px;transform:scaleX(0.9725);transform-origin:0 0;">Configure outlier detection</span>
<span class="t" style="left:25.20px;top:349.00px;font-size:28px;color:#9a9ba3;-webkit-text-stroke:0.34px #9a9ba3;transform:scaleX(1.0041);transform-origin:0 0;">This source is not supported</span>
<span class="t" style="left:25.20px;top:421.00px;font-size:28px;color:#2c2d33;-webkit-text-stroke:0.84px #2c2d33;letter-spacing:0.56px;transform:scaleX(0.9405);transform-origin:0 0;">Create SQL Catalog Item</span>
<span class="t" style="left:25.20px;top:493.00px;font-size:28px;color:#2c2d33;-webkit-text-stroke:0.84px #2c2d33;letter-spacing:0.56px;transform:scaleX(0.9852);transform-origin:0 0;">Add transformation</span>
<span class="t" style="left:25.20px;top:565.00px;font-size:28px;color:#2c2d33;-webkit-text-stroke:0.84px #2c2d33;letter-spacing:0.56px;transform:scaleX(0.9307);transform-origin:0 0;">Edit</span>
<span class="t" style="left:25.20px;top:637.00px;font-size:28px;color:#2c2d33;-webkit-text-stroke:0.84px #2c2d33;letter-spacing:0.56px;transform:scaleX(0.9253);transform-origin:0 0;">Create DQ Firewall</span>
<span class="t" style="left:25.20px;top:709.00px;font-size:28px;color:#2c2d33;-webkit-text-stroke:0.84px #2c2d33;letter-spacing:0.56px;transform:scaleX(0.9495);transform-origin:0 0;">Request access</span>
<span class="t" style="left:25.20px;top:780.00px;font-size:28px;color:#2c2d33;-webkit-text-stroke:0.84px #2c2d33;letter-spacing:0.56px;transform:scaleX(0.9251);transform-origin:0 0;">Delete</span>
</div>
</div>
</body></html>
